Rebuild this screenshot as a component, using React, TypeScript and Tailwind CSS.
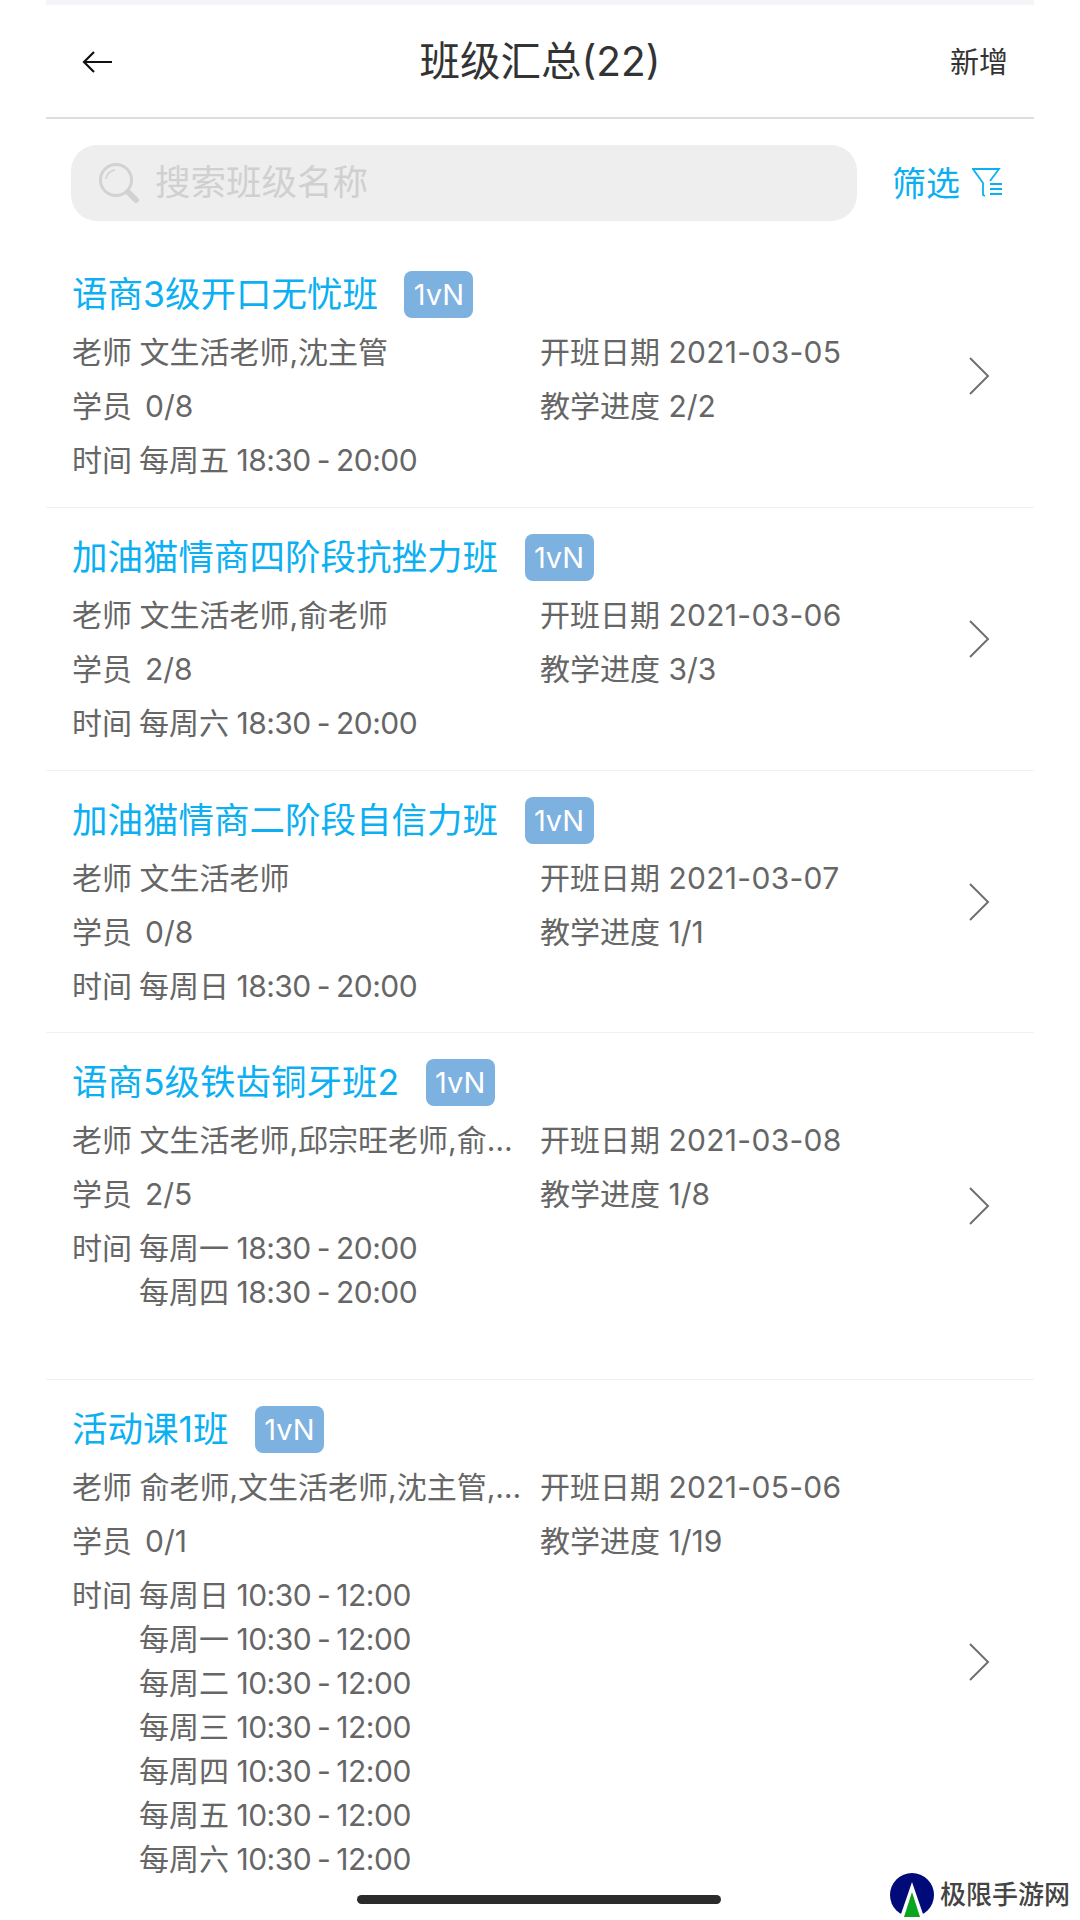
const classes = [
  {
    name: "语商3级开口无忧班",
    teacher: "文生活老师,沈主管",
    students: "0/8",
    date: "2021-03-05",
    progress: "2/2",
    times: [["每周五", "18:30 - 20:00"]],
    box: "h-[263px]",
  },
  {
    name: "加油猫情商四阶段抗挫力班",
    teacher: "文生活老师,俞老师",
    students: "2/8",
    date: "2021-03-06",
    progress: "3/3",
    times: [["每周六", "18:30 - 20:00"]],
    box: "h-[263px]",
  },
  {
    name: "加油猫情商二阶段自信力班",
    teacher: "文生活老师",
    students: "0/8",
    date: "2021-03-07",
    progress: "1/1",
    times: [["每周日", "18:30 - 20:00"]],
    box: "h-[262px]",
  },
  {
    name: "语商5级铁齿铜牙班2",
    teacher: "文生活老师,邱宗旺老师,俞…",
    students: "2/5",
    date: "2021-03-08",
    progress: "1/8",
    times: [
      ["每周一", "18:30 - 20:00"],
      ["每周四", "18:30 - 20:00"],
    ],
    box: "h-[347px]",
  },
  {
    name: "活动课1班",
    teacher: "俞老师,文生活老师,沈主管,…",
    students: "0/1",
    date: "2021-05-06",
    progress: "1/19",
    times: [
      ["每周日", "10:30 - 12:00"],
      ["每周一", "10:30 - 12:00"],
      ["每周二", "10:30 - 12:00"],
      ["每周三", "10:30 - 12:00"],
      ["每周四", "10:30 - 12:00"],
      ["每周五", "10:30 - 12:00"],
      ["每周六", "10:30 - 12:00"],
    ],
    box: "h-[564px]",
  },
];

function ClassCard({ item }: { item: (typeof classes)[number] }) {
  return (
    <div className={`relative shrink-0 overflow-hidden border-b border-[#f0f0f0] pl-[26px] pt-[26px] ${item.box}`}>
      <div className="flex h-[47px] items-center">
        <span className="text-[35.5px] leading-none text-[#0cb0f2]">{item.name}</span>
        <span className="ml-[26.5px] flex h-[47px] w-[69px] items-center justify-center rounded-[8px] bg-[#7db1e0] text-[29px] text-white">
          1vN
        </span>
      </div>
      <div className="mt-[7px] flex text-[30px] leading-[54px] text-[#666666]">
        <div className="w-[468px] shrink-0">
          <div className="whitespace-nowrap [word-spacing:-1px]">老师 {item.teacher}</div>
          <div>
            学员<span className="ml-[13px]">{item.students}</span>
          </div>
          <div className="flex">
            <span className="mr-[7px]">时间</span>
            <div className="pt-[5px] leading-[44px]">
              {item.times.map(([day, time]) => (
                <div key={day}>
                  {day} <span className="ml-[-1px] tracking-[-0.5px] [word-spacing:-2px]">{time}</span>
                </div>
              ))}
            </div>
          </div>
        </div>
        <div>
          <div>
            开班日期 <span className="tracking-[0.3px]">{item.date}</span>
          </div>
          <div>教学进度 {item.progress}</div>
        </div>
      </div>
      <svg
        className="absolute left-[921px] top-1/2 -translate-y-1/2"
        width="24"
        height="40"
        viewBox="0 0 24 40"
        fill="none"
        stroke="#707070"
        strokeWidth="2"
      >
        <path d="M3 2l18 18L3 38" />
      </svg>
    </div>
  );
}

export default function App() {
  return (
    <div className="relative h-[1920px] w-[1080px] overflow-hidden bg-white font-['Inter','Noto_Sans_CJK_SC',sans-serif]">
      <div className="mx-[46px] flex h-full flex-col">
        <div className="h-[5px] shrink-0 bg-[#f4f5f9]" />
        <div className="relative flex h-[114px] shrink-0 items-center justify-between border-b-2 border-[#dddddd] pl-[36px] pr-[26px]">
          <svg width="30" height="24" viewBox="0 0 30 24" fill="none" stroke="#111111" strokeWidth="2.2" className="mt-[2px]">
            <path d="M30 12H2M12 2L2 12l10 10" />
          </svg>
          <span className="absolute inset-x-0 top-[30px] text-center text-[40.5px] leading-[54px] text-[#333333]">班级汇总(22)</span>
          <span className="mt-[4px] text-[29px] text-[#333333]">新增</span>
        </div>
        <div className="mt-[26px] flex shrink-0 items-center pl-[25px]">
          <div className="flex h-[76px] w-[786px] items-center rounded-[26px] bg-[#eeeeee] pl-[27px]">
            <svg width="42" height="42" viewBox="0 0 42 42" fill="none" stroke="#d2d2d2">
              <circle cx="18" cy="18" r="15.5" strokeWidth="3" />
              <path d="M8 17a10 10 0 0 1 9-9" strokeWidth="1.5" />
              <path d="M30 30l8 8" strokeWidth="6" strokeLinecap="round" />
            </svg>
            <span className="ml-[15px] text-[35.5px] text-[#d0d0d0]">搜索班级名称</span>
          </div>
          <span className="ml-[35px] text-[34px] text-[#0cb0f2]">筛选</span>
          <svg className="ml-[12px]" width="30" height="30" viewBox="0 0 30 30" fill="none" stroke="#0cb0f2" strokeWidth="1.8">
            <path d="M13 28l-2-1V15L1 1h26l-9 12" />
            <path d="M18 16h12M18 21h12M18 26h12" />
          </svg>
        </div>
        <div className="mt-[24px] flex flex-col">
          {classes.map((item) => (
            <ClassCard key={item.name} item={item} />
          ))}
        </div>
      </div>
      <div className="absolute left-[357px] top-[1895px] h-[9px] w-[364px] rounded-full bg-[#2b2b2b]" />
      <div className="absolute left-[890px] top-[1873px] flex items-center">
        <svg width="44" height="44" viewBox="0 0 44 44">
          <circle cx="22" cy="22" r="22" fill="#000a78" />
          <path d="M10 44L22 9l12 35z" fill="#ffffff" />
          <path d="M14 44l8-25 8 25z" fill="#0aa51e" />
        </svg>
        <span className="ml-[6px] text-[26px] font-medium leading-none text-[#444444]">极限手游网</span>
      </div>
    </div>
  );
}
